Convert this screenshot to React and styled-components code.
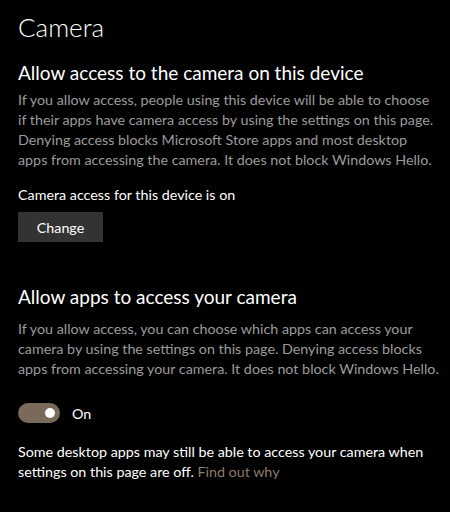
import styled, { createGlobalStyle } from 'styled-components'

const GlobalStyle = createGlobalStyle`
  html, body {
    margin: 0;
    background: #000;
  }
  body {
    font-family: Lato, "Noto Sans", sans-serif;
    color: #fff;
  }
`

const Page = styled.div`
  display: flex;
  flex-direction: column;
  padding: 9px 18px 20px;
  width: 450px;
  height: 512px;
  box-sizing: border-box;
  overflow: hidden;
`

const PageTitle = styled.h1`
  margin: 0;
  font-size: 26px;
  font-weight: 300;
  line-height: 36px;
`

const Section = styled.section`
  display: flex;
  flex-direction: column;
  margin-top: ${({ $top }) => $top}px;
`

const Heading = styled.h2`
  margin: 0;
  font-size: 19px;
  font-weight: 400;
  line-height: 26px;
`

const Description = styled.p`
  margin: ${({ $top }) => $top}px 0 0;
  font-size: 14.3px;
  line-height: 20px;
  color: #9b9b9b;
  white-space: nowrap;
`

const Status = styled.p`
  margin: 15px 0 0;
  font-size: 14.3px;
  line-height: 20px;
`

const ChangeButton = styled.button`
  margin-top: 7px;
  align-self: flex-start;
  width: 85px;
  height: 30px;
  border: none;
  background: #333;
  color: #fff;
  font-family: inherit;
  font-size: 14.3px;
  padding: 0;
`

const ToggleRow = styled.div`
  display: flex;
  align-items: center;
  gap: 12px;
  margin-top: 24px;
  font-size: 14.3px;
`

const Toggle = styled.span`
  position: relative;
  display: inline-block;
  width: 42px;
  height: 20px;
  border-radius: 10px;
  background: ${({ $on }) => ($on ? '#7a6a59' : '#444')};

  &::after {
    content: '';
    position: absolute;
    top: 5px;
    left: ${({ $on }) => ($on ? '27px' : '5px')};
    width: 10px;
    height: 10px;
    border-radius: 50%;
    background: #fff;
  }
`

const Note = styled.p`
  margin: 19px 0 0;
  font-size: 14.3px;
  line-height: 20px;
  white-space: nowrap;
`

const Link = styled.a`
  color: #8c7b6a;
  text-decoration: none;
`

export default function App() {
  return (
    <>
      <GlobalStyle />
      <Page>
        <PageTitle>Camera</PageTitle>

        <Section $top={15}>
          <Heading>Allow access to the camera on this device</Heading>
          <Description $top={4}>
            If you allow access, people using this device will be able to choose
            <br />
            if their apps have camera access by using the settings on this page.
            <br />
            Denying access blocks Microsoft Store apps and most desktop
            <br />
            apps from accessing the camera. It does not block Windows Hello.
          </Description>
          <Status>Camera access for this device is on</Status>
          <ChangeButton>Change</ChangeButton>
        </Section>

        <Section $top={42}>
          <Heading>Allow apps to access your camera</Heading>
          <Description $top={9}>
            If you allow access, you can choose which apps can access your
            <br />
            camera by using the settings on this page. Denying access blocks
            <br />
            apps from accessing your camera. It does not block Windows Hello.
          </Description>
          <ToggleRow>
            <Toggle $on />
            <span>On</span>
          </ToggleRow>
          <Note>
            Some desktop apps may still be able to access your camera when
            <br />
            settings on this page are off. <Link href="#">Find out why</Link>
          </Note>
        </Section>
      </Page>
    </>
  )
}
